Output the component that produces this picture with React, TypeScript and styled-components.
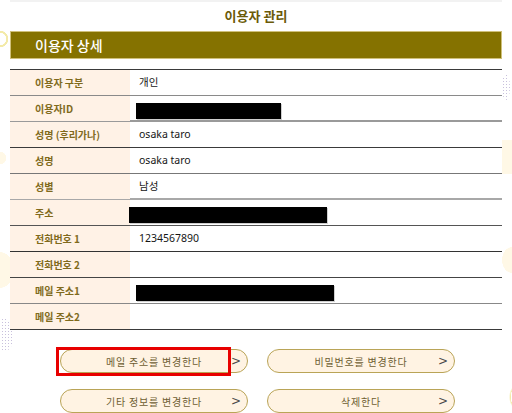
import styled, { createGlobalStyle } from "styled-components";

const GlobalStyle = createGlobalStyle`
  html, body {
    margin: 0;
    padding: 0;
    background: #ffffff;
  }
  body {
    font-family: "Noto Sans", "Noto Sans CJK KR", sans-serif;
  }
`;

// faint decorative blobs and dotted patches along the page edges
const Page = styled.div`
  position: relative;
  width: 512px;
  height: 413px;
  overflow: hidden;
  background:
    radial-gradient(circle at 0 39px, transparent 6px, #f3eaa8 6.5px, #f3eaa8 8px, transparent 8.5px) no-repeat,
    radial-gradient(circle at 0 158px, #fff8e6 6px, transparent 6.5px) no-repeat,
    radial-gradient(ellipse 14px 18px at 0 270px, #fff8e6 98%, transparent 100%) no-repeat,
    radial-gradient(ellipse 10px 13px at 512px 260px, #fff8e6 98%, transparent 100%) no-repeat,
    radial-gradient(ellipse 6px 11px at 515px 397px, transparent 70%, #f3eaa8 75%, transparent 100%) no-repeat,
    linear-gradient(#fff8e6, #fff8e6) 502px 140px / 10px 34px no-repeat,
    #ffffff;

  &::before,
  &::after {
    content: "";
    position: absolute;
    background: radial-gradient(circle, #c8c0dc 0.8px, transparent 1px) 0 0 / 3px 3px;
    border-radius: 50%;
  }
  &::before {
    left: -8px;
    top: 318px;
    width: 22px;
    height: 34px;
  }
  &::after {
    left: 502px;
    top: 74px;
    width: 8px;
    height: 26px;
  }
`;

const Content = styled.div`
  position: relative;
  z-index: 1;
  display: flex;
  flex-direction: column;
  padding: 0 10px;
`;

const TitleBar = styled.h1`
  margin: 0;
  height: 29px;
  border-top: 2px solid #f2f2f2;
  text-align: center;
  font-family: "Noto Sans CJK KR", sans-serif;
  font-size: 13px;
  font-weight: 700;
  line-height: 27px;
  color: #6b5a08;
`;

const SectionHeader = styled.h2`
  margin: 0;
  height: 26px;
  background: #857200;
  border: 1px solid #cfc07a;
  padding-left: 24px;
  font-family: "Noto Sans CJK KR", sans-serif;
  font-size: 14px;
  font-weight: 500;
  line-height: 26px;
  color: #ffffff;
`;

const Table = styled.div`
  margin-top: 10px;
  border-top: 1px solid #3a3a3a;
`;

const Row = styled.div<{ $line: string; $thick?: boolean }>`
  display: grid;
  grid-template-columns: 120px 1fr;
  height: ${(p) => (p.$thick ? 24 : 25)}px;
  border-bottom: ${(p) => (p.$thick ? 2 : 1)}px solid ${(p) => p.$line};
`;

const Label = styled.div`
  background: #fff2e6;
  padding-left: 25px;
  font-family: "Noto Sans CJK KR", sans-serif;
  font-size: 10px;
  font-weight: 700;
  line-height: 25px;
  color: #806a1c;
`;

const Value = styled.div`
  padding-left: 9px;
  font-family: "Noto Sans", "Noto Sans CJK KR", sans-serif;
  font-size: 10.5px;
  line-height: 25px;
  color: #151515;
`;

const Redacted = styled.span<{ $offset: number; $w: number }>`
  display: block;
  margin-top: 7px;
  margin-left: ${(p) => p.$offset}px;
  width: ${(p) => p.$w}px;
  height: 16px;
  background: #000000;
  box-shadow: 1px 1px 0 #cfcfcf;
`;

const Actions = styled.div`
  display: grid;
  grid-template-columns: 188px 188px;
  column-gap: 19px;
  row-gap: 16px;
  justify-content: center;
  margin: 19px 0 0 3px;
`;

const ActionButton = styled.button`
  position: relative;
  display: grid;
  grid-template-columns: 16px 1fr 16px;
  align-items: center;
  height: 24px;
  border: 1px solid #b9a457;
  border-radius: 12px;
  background: #fff3e3;
  font-family: "Noto Sans CJK KR", sans-serif;
  font-size: 10px;
  letter-spacing: 0.8px;
  color: #6e5e32;
  padding: 0;
  cursor: pointer;
`;

const ButtonText = styled.span`
  grid-column: 2;
  text-align: center;
`;

const Chevron = styled.span`
  grid-column: 3;
  justify-self: start;
  font-family: "DejaVu Sans", sans-serif;
  font-size: 12px;
  line-height: 1;
  letter-spacing: 0;
  color: #4a4a4a;
`;

// red annotation frame drawn over the first button
const Highlight = styled.span`
  position: absolute;
  left: -5px;
  top: -3px;
  width: 175px;
  height: 29px;
  border: 3px solid #e80000;
  box-sizing: border-box;
  pointer-events: none;
`;

type Field = {
  label: string;
  value?: string;
  redact?: { offset: number; w: number };
  line: string;
  thick?: boolean;
};

const fields: Field[] = [
  { label: "이용자 구분", value: "개인", line: "#8a8a8a" },
  { label: "이용자ID", redact: { offset: -3, w: 145 }, line: "#9a9a9a", thick: true },
  { label: "성명 (후리가나)", value: "osaka taro", line: "#3a3a3a" },
  { label: "성명", value: "osaka taro", line: "#777777" },
  { label: "성별", value: "남성", line: "#a8a8a8", thick: true },
  { label: "주소", redact: { offset: -10, w: 198 }, line: "#555555" },
  { label: "전화번호 1", value: "1234567890", line: "#333333" },
  { label: "전화번호 2", line: "#444444" },
  { label: "메일 주소1", redact: { offset: -3, w: 198 }, line: "#888888" },
  { label: "메일 주소2", line: "#3a3a3a" },
];

const actions = ["메일 주소를 변경한다", "비밀번호를 변경한다", "기타 정보를 변경한다", "삭제한다"];

const App = () => {
  return (
    <Page>
      <GlobalStyle />
      <Content>
        <TitleBar>이용자 관리</TitleBar>
        <SectionHeader>이용자 상세</SectionHeader>
        <Table>
          {fields.map((f) => (
            <Row key={f.label} $line={f.line} $thick={f.thick}>
              <Label>{f.label}</Label>
              <Value>
                {f.redact ? <Redacted $offset={f.redact.offset} $w={f.redact.w} /> : f.value}
              </Value>
            </Row>
          ))}
        </Table>
        <Actions>
          {actions.map((a, i) => (
            <ActionButton key={a}>
              <ButtonText>{a}</ButtonText>
              <Chevron>&gt;</Chevron>
              {i === 0 && <Highlight />}
            </ActionButton>
          ))}
        </Actions>
      </Content>
    </Page>
  );
};

export default App;
